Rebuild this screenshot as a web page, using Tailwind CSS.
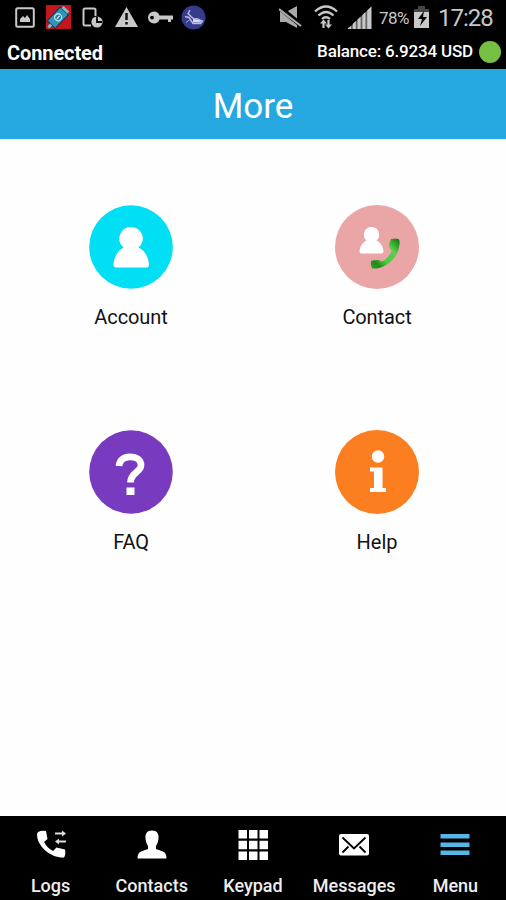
<!DOCTYPE html>
<html lang="en">
<head>
<meta charset="utf-8">
<title>More</title>
<script src="https://cdn.jsdelivr.net/npm/@tailwindcss/browser@4"></script>
</head>
<body class="bg-white">
<div class="flex h-[900px] w-[506px] flex-col overflow-hidden bg-[#fefefe] font-['Roboto','Liberation_Sans',sans-serif]">
  <div class="flex h-[69px] flex-col bg-black text-white">
    <div class="flex h-[34px] items-center pl-[15px] pr-[12px] text-[#c8c8c8]">
      <svg class="h-[21px] w-[20px]" viewBox="0 0 20 21"><rect x="1.2" y="1.2" width="17.6" height="18.6" rx="1.5" fill="none" stroke="currentColor" stroke-width="2"/><path d="M5 15v-3l3-3 2 2 2-3 3 4v3z" fill="currentColor"/></svg>
      <svg class="ml-[11px] h-[24px] w-[25px]" viewBox="0 0 25 24"><path d="M0 0h25v24H0z" fill="#c5161d"/><g transform="rotate(-46 12.500 12)"><path d="M2 6.500h19v11H2z" fill="#2f93ba" stroke="#0e384b"/><path d="M-2 10.500h4v3h-4zM21 8h3v8h-3z" fill="#78bdd5"/><circle cx="12" cy="12" r="3.400" fill="#287da4" stroke="#b4e7f2" stroke-width="1.200"/><path d="M10 12h4" stroke="#fff"/></g></svg>
      <svg class="ml-[11px] h-[21px] w-[21px]" viewBox="0 0 21 21"><path d="M9 18.500H3a1.500 1.500 0 0 1-1.500-1.500V3A1.500 1.500 0 0 1 3 1.500h9A1.500 1.500 0 0 1 13.500 3v6" fill="none" stroke="currentColor" stroke-width="2"/><circle cx="15" cy="15" r="5.600" fill="currentColor"/><path d="M15 9.500v5.500h5" stroke="#000" stroke-width="1.800" fill="none"/></svg>
      <svg class="ml-[12px] h-[20px] w-[23px]" viewBox="0 0 23 20"><path d="M11.500 0 23 20H0z" fill="currentColor"/><path d="M11.500 6v7M11.500 15v2.500" stroke="#111" stroke-width="2.500"/></svg>
      <svg class="ml-[10px] h-[13px] w-[25px]" viewBox="0 0 25 13"><path fill-rule="evenodd" d="M6 .5c2.700 0 4.600 1.500 5.500 4H25v4h-2V11h-3V8.500h-8.500C10.600 11 8.700 12.500 6 12.500a6 6 0 0 1 0-12M4 4.700a1.900 1.900 0 1 0 0 3.800 1.900 1.900 0 0 0 0-3.800" fill="currentColor"/></svg>
      <svg class="ml-[8px] h-[25px] w-[25px]" viewBox="0 0 25 25"><circle cx="12.500" cy="12.500" r="12" fill="#363b8c"/><path d="M9 5 7 8.500l3 3 3 2.500q4-1 5.500 1l3 1-2 2.500H12l-2-3-2-3-4-1" fill="none" stroke="#b9bce0" stroke-width="1.500"/><path d="m12 14 6 1 3 2.500h-9z" fill="#d8daf2"/><path d="M5 17.500 8.500 15" stroke="#9da1d2"/></svg>
      <svg class="ml-auto h-[22px] w-[23px]" viewBox="0 0 23 22"><path d="M1 6h6l11-6v22L7 16H1z" fill="#aaa"/><path d="m1 2 21 17" stroke="#000" stroke-width="5"/><path d="m0 3 22 17" stroke="#aaa" stroke-width="2.200"/></svg>
      <svg class="ml-[12px] h-[25px] w-[24px]" viewBox="0 0 24 25" fill="none" stroke="currentColor"><path d="M1 6.500q11-10 22 0M4.500 10.500q7.500-7 15 0M8 14q4-3.500 8 0" stroke-width="2.300"/><path d="M9.500 23v-6M14.500 15v6" stroke-width="2.200"/><path d="m6 18.500 3.500-4 3.500 4zM11 19.500l3.500 4 3.500-4z" fill="currentColor" stroke="none"/></svg>
      <svg class="ml-[10px] h-[23px] w-[24px]" viewBox="0 0 24 23" fill="#c8c8c8"><path d="M0 23 24 0v23z" fill="#666"/><path d="M0 23v-1l3-2v3zM4.800 23v-5l3-3v8zM9.600 23V13.500l3-3V23zM14.400 23V9l3-3v17zM19.200 23V4.500L23 1v22z"/></svg>
      <span class="ml-[7px] w-[32px] whitespace-nowrap pt-[2px] text-[17px] leading-none tracking-[-0.5px]">78%</span>
      <svg class="ml-[3px] h-[22px] w-[15px]" viewBox="0 0 15 22"><path d="M4 0h7v3h4v4H0V3h4z" fill="#444"/><path d="M0 6h15v16H0z" fill="currentColor"/><path d="m10 5-6 8h4l-2 7 7-9H9z" fill="#000"/></svg>
      <span class="ml-[9px] w-[56px] whitespace-nowrap pt-[2px] text-[24px] leading-none tracking-[-1px]">17:28</span>
    </div>
    <div class="flex h-[35px] items-center pl-[7px] pr-[5px]">
      <span class="pt-[2px] text-[20px] font-bold leading-none tracking-[-0.1px]">Connected</span>
      <span class="ml-auto text-[17px] font-medium leading-none tracking-[-0.18px]">Balance: 6.9234 USD</span>
      <span class="ml-[6px] size-[22px] rounded-full bg-[#75c043]"></span>
    </div>
  </div>
  <header class="flex h-[70px] items-center justify-center bg-[#25a8e0] pt-[4px] text-[35px] leading-none text-white">More</header>
  <main class="grid flex-1 auto-rows-[225px] grid-cols-2 pl-[8px] pr-[6px] pt-[66px] text-[20px] leading-none text-[#111]">
    <div class="flex flex-col items-center gap-[18px]">
      <svg class="size-[84px]" viewBox="0 0 84 84"><circle cx="42" cy="42" r="41.800" fill="#00dff3"/><path d="M42 22a11.500 11.500 0 0 1 7.500 20.500C55 45 59 50.500 60 59q.2 3.500-3 3.500H27.500q-3.300 0-3-3.500c1-8.500 5-14 10.200-16.500A11.500 11.500 0 0 1 42 22" fill="#fff"/></svg>
      <span class="tracking-[-0.1px]">Account</span>
    </div>
    <div class="flex flex-col items-center gap-[18px]">
      <svg class="size-[84px]" viewBox="0 0 84 84"><defs><linearGradient id="handset" x1="0" y1=".9" x2=".9" y2="0"><stop offset="0" stop-color="#2a9a22"/><stop offset=".15" stop-color="#208a1a"/><stop offset=".35" stop-color="#4bc840"/><stop offset=".7" stop-color="#5dd04f"/><stop offset="1" stop-color="#158010"/></linearGradient></defs><circle cx="42" cy="42" r="42" fill="#eaa5a6"/><path d="M36.500 22a7.700 7.700 0 0 1 5 13.500c4 2 6.500 5.500 7 11q0 2-2 2h-20q-2 0-2-2c.5-5.500 3-9 7-11A7.700 7.700 0 0 1 36.500 22" fill="#fff"/><path d="M56 34q4-1 7.500 0 1.500 1 1 5c-.5 9-6 17-13.500 21-5 3-10 4-13.500 3.500-1.500-1.500-2-5-1.500-7.500q4-1.500 8-1l2 1.500q3-.5 5.500-3c3-3 5-6 5-8l-2.500-3q0-5 2-8.500" fill="url(#handset)"/></svg>
      <span class="tracking-[-0.1px]">Contact</span>
    </div>
    <div class="flex flex-col items-center gap-[18px]">
      <svg class="size-[84px]" viewBox="0 0 84 84"><circle cx="42" cy="42" r="41.800" fill="#783bbf"/><path d="M30 36c.5-6 5-9.200 11-9.200 7 0 11 3.500 11 8.400 0 7-10.500 7.300-10.500 17.300" fill="none" stroke="#fff" stroke-width="6.700"/><path d="M37.500 57.500h8V65h-8z" fill="#fff"/></svg>
      <span class="tracking-[-0.2px]">FAQ</span>
    </div>
    <div class="flex flex-col items-center gap-[18px]">
      <svg class="size-[84px]" viewBox="0 0 84 84"><circle cx="42" cy="42" r="42" fill="#fb7f20"/><circle cx="43" cy="26.500" r="6.200" fill="#fff"/><path d="M35 37.500h12.500V58H51v4H35v-4h4V41.500h-4z" fill="#fff"/></svg>
      <span>Help</span>
    </div>
  </main>
  <nav class="grid h-[84px] grid-cols-5 bg-black pt-[14px] text-[18px] font-medium leading-none text-[#eee]">
    <div class="flex flex-col items-center gap-[17px]"><svg class="size-[30px]" viewBox="0 0 30 30"><path d="M2 2q4-2 8-1l1.500 8-3.500 3c2 4 5 7 9 9l3.500-3.500 8.500 2q1 5-1 8C15 28 1 17 1 4z" fill="#fff"/><path d="M19 3.500h8M22 11.500h8" stroke="#ddd" stroke-width="2"/><path d="m26 .5 4 3-4 3zM23 8.500l-4 3 4 3z" fill="#ddd"/></svg><span>Logs</span></div>
    <div class="flex flex-col items-center gap-[17px]"><svg class="size-[30px]" viewBox="0 0 30 30"><path d="M15 .5c5 0 7 3.500 6.500 8-.5 4-1.500 6-2.500 7.500v3l7 2.500q3.500 1.500 3.500 7H.5q0-5.500 3.500-7l7-2.500v-3c-1-1.500-2-3.500-2.500-7.500C8 4 10 .5 15 .5" fill="#fff"/></svg><span>Contacts</span></div>
    <div class="flex flex-col items-center gap-[17px]"><svg class="size-[30px]" viewBox="0 0 30 30" fill="#fff"><path d="M.5 0H9v8.500H.500zM11 0h8.500v8.500H11zM21.500 0H30v8.500h-8.500zM.5 10.700H9v8.500H.500zM11 10.700h8.500v8.500H11zM21.500 10.700H30v8.500h-8.500zM.5 21.400H9v8.500H.500zM11 21.400h8.500v8.500H11zM21.500 21.400H30v8.500h-8.500z"/></svg><span>Keypad</span></div>
    <div class="flex flex-col items-center gap-[17px]"><svg class="size-[30px]" viewBox="0 0 30 30"><rect y="4" width="30" height="21.500" rx="2" fill="#fff"/><path d="M3.500 7.500 15 18.500l11.500-11M3.500 22.500l6-6M20.500 16.500l6 6" fill="none" stroke="#000" stroke-width="1.900"/></svg><span>Messages</span></div>
    <div class="flex flex-col items-center gap-[17px]"><svg class="size-[30px]" viewBox="0 0 30 30"><path d="M.5 4h29v4.500H.500zM.5 12.500h29V17H.500zM.5 20.500h29V25H.500z" fill="#56b7e6"/></svg><span>Menu</span></div>
  </nav>
</div>
</body>
</html>
